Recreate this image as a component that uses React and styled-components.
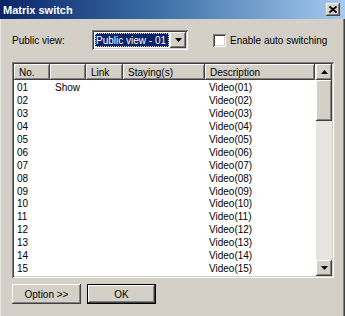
import React from "react";
import styled, { createGlobalStyle } from "styled-components";

const Global = createGlobalStyle`
  html, body { margin: 0; padding: 0; background: #d4d0c8; }
  body { font-family: "Liberation Sans", Arial, sans-serif; font-size: 10px; color: #000; }
`;

const raised = `box-shadow: inset -1px -1px 0 #404040, inset 1px 1px 0 #fff, inset -2px -2px 0 #808080, inset 2px 2px 0 #d4d0c8;`;
const sunken = `box-shadow: inset 1px 1px 0 #808080, inset -1px -1px 0 #fff, inset 2px 2px 0 #404040, inset -2px -2px 0 #d4d0c8;`;

const Window = styled.div`
  width: 345px;
  height: 316px;
  background: #d4d0c8;
  display: flex;
  flex-direction: column;
  box-sizing: border-box;
  overflow: hidden;
  box-shadow: inset 1px 0 0 #e8e6e0, inset -1px 0 0 #404040, inset -2px 0 0 #808080;
`;

const TitleBar = styled.div`
  height: 19px;
  display: flex;
  align-items: center;
  justify-content: space-between;
  padding: 0 5px 0 3px;
  background: linear-gradient(to right, #0a246a 0%, #3a6ea5 45%, #a6caf0 100%);
  flex-shrink: 0;
`;

const Title = styled.span`
  color: #fff;
  font-weight: bold;
  font-size: 11px;
  white-space: nowrap;
`;

const CloseBtn = styled.div`
  width: 14px;
  height: 13px;
  background: #d4d0c8;
  ${raised}
  display: flex;
  align-items: center;
  justify-content: center;
`;

const Body = styled.div`
  flex: 1;
  display: flex;
  flex-direction: column;
  padding: 11px 11px 0 12px;
`;

const ControlRow = styled.div`
  display: flex;
  align-items: center;
  height: 20px;
  white-space: nowrap;
`;

const Label = styled.span`
  width: 80px;
  font-size: 10px;
`;

const Combo = styled.div`
  width: 96px;
  height: 20px;
  box-sizing: border-box;
  padding: 2px;
  background: #fff;
  ${sunken}
  display: flex;
  align-items: stretch;
  flex-shrink: 0;
`;

const ComboText = styled.div`
  flex: 1;
  margin: 1px;
  background: #0a246a;
  color: #fff;
  font-size: 10px;
  display: flex;
  align-items: center;
  padding-left: 1px;
  white-space: nowrap;
  overflow: hidden;
  outline: 1px dotted #d4d0c8;
  outline-offset: -1px;
`;

const DropBtn = styled.div`
  width: 16px;
  flex-shrink: 0;
  background: #d4d0c8;
  ${raised}
  display: flex;
  align-items: center;
  justify-content: center;
`;

const CheckWrap = styled.label`
  display: flex;
  align-items: center;
  margin-left: 25px;
  gap: 4px;
  font-size: 10px;
  white-space: nowrap;
`;

const CheckBox = styled.span`
  width: 13px;
  height: 13px;
  flex-shrink: 0;
  background: #fff;
  box-sizing: border-box;
  ${sunken}
`;

const ListBox = styled.div`
  margin-top: 12px;
  width: 322px;
  height: 216px;
  box-sizing: border-box;
  padding: 2px;
  background: #fff;
  ${sunken}
  display: flex;
  overflow: hidden;
  flex-shrink: 0;
`;

const ListMain = styled.div`
  flex: 1;
  display: flex;
  flex-direction: column;
  overflow: hidden;
`;

const Header = styled.div`
  display: flex;
  height: 16px;
  flex-shrink: 0;
`;

const HeadCell = styled.div`
  width: ${(p) => p.$w}px;
  flex-shrink: 0;
  box-sizing: border-box;
  background: #d4d0c8;
  ${raised}
  padding-left: ${(p) => p.$pl ?? 5}px;
  display: flex;
  align-items: center;
  font-size: 10px;
  white-space: nowrap;
`;

const Rows = styled.div`
  padding-top: 2px;
`;

const Row = styled.div`
  display: flex;
  height: 12.9px;
  align-items: center;
  font-size: 10px;
  line-height: 12px;
`;

const Cell = styled.div`
  width: ${(p) => p.$w}px;
  flex-shrink: 0;
  padding-left: ${(p) => p.$pl ?? 4}px;
  box-sizing: border-box;
  white-space: nowrap;
`;

const ScrollBar = styled.div`
  width: 16px;
  flex-shrink: 0;
  display: flex;
  flex-direction: column;
  background: #e6e4de;
`;

const ScrollBtn = styled.div`
  width: 16px;
  height: 16px;
  flex-shrink: 0;
  background: #d4d0c8;
  box-sizing: border-box;
  ${raised}
  display: flex;
  align-items: center;
  justify-content: center;
`;

const Thumb = styled.div`
  height: 41px;
  flex-shrink: 0;
  background: #d4d0c8;
  ${raised}
`;

const Track = styled.div`
  flex: 1;
`;

const ButtonRow = styled.div`
  display: flex;
  gap: 6px;
  margin-top: 6px;
`;

const Button = styled.div`
  width: 69px;
  height: 20px;
  box-sizing: border-box;
  background: #d4d0c8;
  display: flex;
  align-items: center;
  justify-content: center;
  font-size: 10px;
  white-space: nowrap;
  ${(p) =>
    p.$default
      ? `border: 1px solid #000; box-shadow: inset -1px -1px 0 #404040, inset 1px 1px 0 #fff, inset -2px -2px 0 #808080;`
      : raised}
`;

const Arrow = ({ up }) => (
  <svg width="7" height="4" viewBox="0 0 7 4">
    <path d={up ? "M3.5 0 L7 4 L0 4 Z" : "M0 0 L7 0 L3.5 4 Z"} fill="#000" />
  </svg>
);

const cols = [36, 36, 37, 82, 110];
const rows = Array.from({ length: 16 }, (_, i) => String(i + 1).padStart(2, "0"));

export default function App() {
  return (
    <>
      <Global />
      <Window>
        <TitleBar>
          <Title>Matrix switch</Title>
          <CloseBtn>
            <svg width="8" height="7" viewBox="0 0 8 7">
              <path d="M0.5 0.5 L7.5 6.5 M7.5 0.5 L0.5 6.5" stroke="#000" strokeWidth="1.8" />
            </svg>
          </CloseBtn>
        </TitleBar>
        <Body>
          <ControlRow>
            <Label>Public view:</Label>
            <Combo>
              <ComboText>Public view - 01</ComboText>
              <DropBtn>
                <Arrow />
              </DropBtn>
            </Combo>
            <CheckWrap>
              <CheckBox />
              <span>Enable auto switching</span>
            </CheckWrap>
          </ControlRow>
          <ListBox>
            <ListMain>
              <Header>
                <HeadCell $w={cols[0]}>No.</HeadCell>
                <HeadCell $w={cols[1]}></HeadCell>
                <HeadCell $w={cols[2]}>Link</HeadCell>
                <HeadCell $w={cols[3]}>Staying(s)</HeadCell>
                <HeadCell $w={cols[4]}>Description</HeadCell>
              </Header>
              <Rows>
                {rows.map((n, i) => (
                  <Row key={n}>
                    <Cell $w={cols[0]} $pl={3}>{n}</Cell>
                    <Cell $w={cols[1]} $pl={5}>{i === 0 ? "Show" : ""}</Cell>
                    <Cell $w={cols[2]}></Cell>
                    <Cell $w={cols[3]}></Cell>
                    <Cell $w={cols[4]}>Video({n})</Cell>
                  </Row>
                ))}
              </Rows>
            </ListMain>
            <ScrollBar>
              <ScrollBtn>
                <Arrow up />
              </ScrollBtn>
              <Thumb />
              <Track />
              <ScrollBtn>
                <Arrow />
              </ScrollBtn>
            </ScrollBar>
          </ListBox>
          <ButtonRow>
            <Button>Option &gt;&gt;</Button>
            <Button $default>OK</Button>
          </ButtonRow>
        </Body>
      </Window>
    </>
  );
}
